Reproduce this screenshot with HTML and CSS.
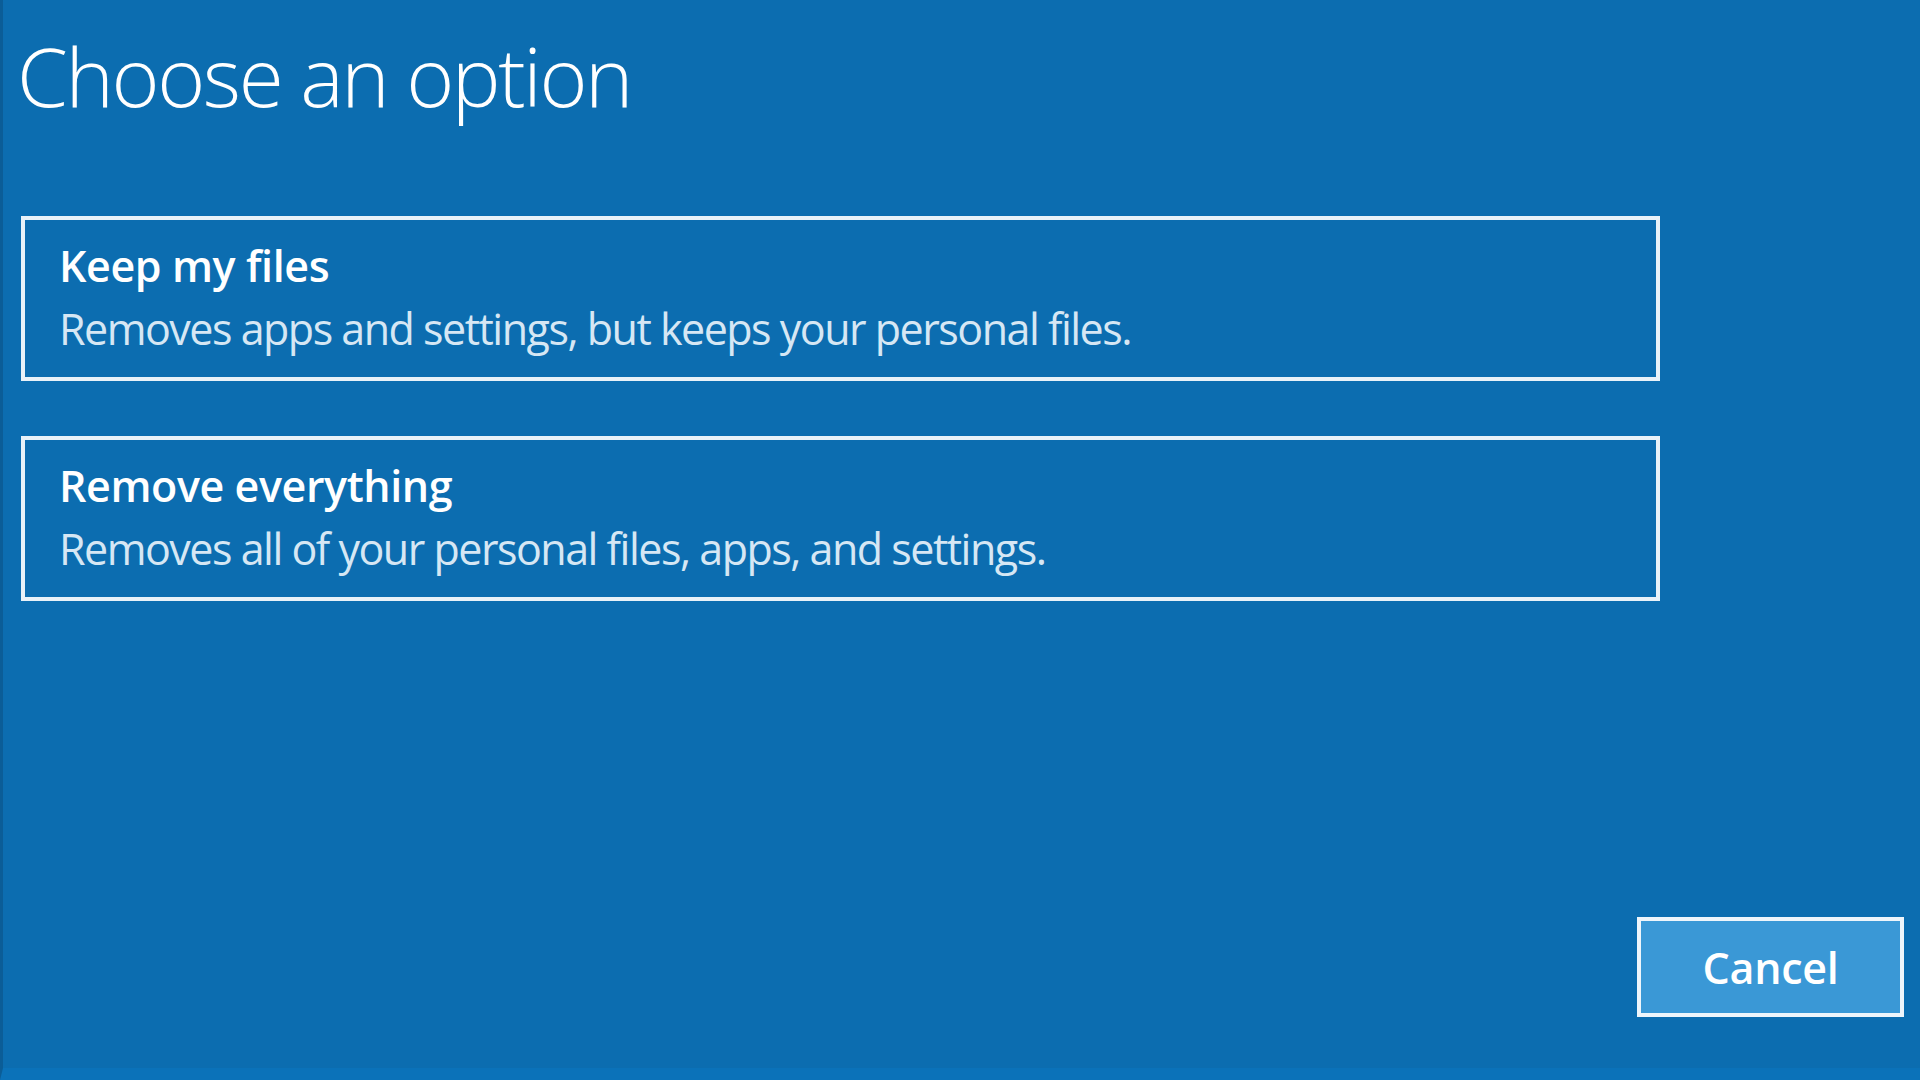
FILE: index.html
```html
<!DOCTYPE html>
<html lang="en">
<head>
<meta charset="utf-8">
<title>Choose an option</title>
<link rel="stylesheet" href="styles.css">
</head>
<body>
<div class="screen">
  <main class="content">
    <h1 class="title">Choose an option</h1>
    <div class="options">
      <button class="option" type="button">
        <span class="option-title">Keep my files</span>
        <span class="option-desc">Removes apps and settings, but keeps your personal files.</span>
      </button>
      <button class="option" type="button">
        <span class="option-title">Remove everything</span>
        <span class="option-desc">Removes all of your personal files, apps, and settings.</span>
      </button>
    </div>
  </main>
  <footer class="footer">
    <button class="cancel" type="button">Cancel</button>
  </footer>
</div>
</body>
</html>
```
FILE: styles.css
```css
* { box-sizing: border-box; }
html, body { margin: 0; padding: 0; height: 100%; }
body {
  background: #0c6db0;
  font-family: "Open Sans", "Noto Sans", "Liberation Sans", sans-serif;
  color: #ffffff;
  overflow: hidden;
}
.screen {
  height: 1080px;
  display: flex;
  flex-direction: column;
  border-left: 3px solid #0b5d97;
  border-bottom: 12px solid #0b72b9;
}
.content {
  flex: 1;
  display: flex;
  flex-direction: column;
  padding: 23px 0 0 14px;
}
.title {
  margin: 0 0 89px 0;
  font-weight: 300;
  font-size: 82px;
  line-height: 104px;
  letter-spacing: -2.4px;
  color: #ffffff;
}
.options {
  display: flex;
  flex-direction: column;
  gap: 55px;
  width: 1639px;
  margin-left: 4px;
}
.option {
  display: flex;
  flex-direction: column;
  align-items: flex-start;
  height: 165px;
  padding: 14px 0 0 34px;
  background: transparent;
  border: 4px solid #e9f2f9;
  color: #ffffff;
  font-family: inherit;
  text-align: left;
  cursor: pointer;
}
.option-title {
  font-size: 43px;
  line-height: 63px;
  font-weight: 600;
  letter-spacing: -0.4px;
  color: #ffffff;
}
.option-desc {
  font-size: 43px;
  line-height: 63px;
  font-weight: 400;
  letter-spacing: -1.5px;
  color: #d6e7f4;
}
.footer {
  display: flex;
  justify-content: flex-end;
  padding: 0 16px 51px 0;
}
.cancel {
  width: 267px;
  height: 100px;
  background: #3a98d6;
  border: 4px solid #eef5fb;
  color: #ffffff;
  font-family: inherit;
  font-size: 43px;
  font-weight: 600;
  letter-spacing: -0.3px;
  padding: 0;
  cursor: pointer;
}
```
